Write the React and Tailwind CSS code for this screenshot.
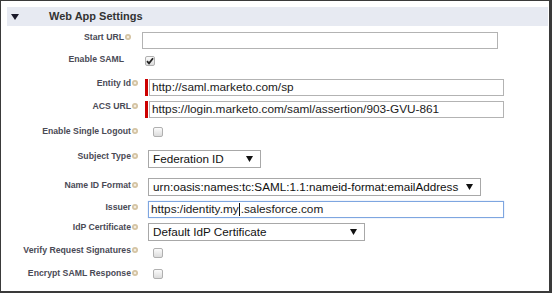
import React from "react";

const Help = () => (
  <svg width="6" height="6" viewBox="0 0 6 6" className="ml-[1px] shrink-0">
    <circle cx="3" cy="3" r="3" fill="#d4c3a2" />
    <circle cx="3" cy="3" r="1.3" fill="#f3ece0" />
  </svg>
);

const Label = ({ text, help = true, w = "w-[131px]", mt = "mt-0" }) => (
  <div className={`${w} ${mt} shrink-0 flex items-center justify-end h-[12px] text-[8.7px] leading-[12px] font-bold text-[#4a4a55]`}>
    <span>{text}</span>
    {help ? <Help /> : <span className="w-[7px]" />}
  </div>
);

const Box = ({ children, w, blue = false }) => (
  <div
    className={`${w} h-[17px] flex items-center px-[2px] bg-white text-[11.8px] text-[#1a1a1a] whitespace-nowrap overflow-hidden ${
      blue ? "border border-[#7ea6e0] shadow-[0_0_1px_#a9c4ec]" : "border border-[#b3b3b3]"
    }`}
  >
    {children}
  </div>
);

const Sel = ({ text, w }) => (
  <div className={`${w} h-[18px] flex items-center justify-between pl-[4px] pr-[7px] bg-white border border-[#a8a8a8] text-[11.7px] text-[#111] whitespace-nowrap overflow-hidden`}>
    <span>{text}</span>
    <svg width="7" height="6" viewBox="0 0 7 6" className="shrink-0">
      <polygon points="0,0 7,0 3.5,6" fill="#111" />
    </svg>
  </div>
);

const Check = ({ checked = false }) => (
  <div className="w-[10px] h-[10px] rounded-[2px] border border-[#b0b0b0] bg-gradient-to-b from-[#fbfbfb] to-[#dcdcdc] flex items-center justify-center">
    {checked && (
      <svg width="8" height="8" viewBox="0 0 8 8">
        <path d="M1 4.2 L3 6.3 L7 1.3" stroke="#222" strokeWidth="1.8" fill="none" />
      </svg>
    )}
  </div>
);

const Red = () => <div className="w-[3px] h-[17px] bg-[#cc0000] mr-[1px]" />;

export default function App() {
  return (
    <div
      className="w-[552px] h-[293px] bg-white border-l-[1px] border-t-[1px] border-r-[3px] border-b-[2px] border-[#3a3a3a] pt-[6px] pl-[6px] pr-[1px] overflow-hidden"
      style={{ fontFamily: '"Liberation Sans", Arial, sans-serif' }}
    >
      <div className="h-[19px] bg-[#e7eaf2] flex items-center">
        <svg width="8" height="6" viewBox="0 0 8 6" className="ml-[4px]">
          <polygon points="0,0 8,0 4,6" fill="#1a1a2a" />
        </svg>
        <span className="ml-[30px] text-[11px] font-bold text-[#333]">Web App Settings</span>
      </div>

      {/* Start URL */}
      <div className="mt-[6px] h-[19px] flex items-start">
        <Label text="Start URL" w="w-[124px]" mt="-mt-[1px]" />
        <div className="ml-[11px]">
          <Box w="w-[356px]" />
        </div>
      </div>

      {/* Enable SAML */}
      <div className="h-[28px] flex items-start">
        <Label text="Enable SAML" help={false} w="w-[124px]" mt="mt-[2px]" />
        <div className="ml-[14px] mt-[5px]">
          <Check checked />
        </div>
      </div>

      {/* Entity Id */}
      <div className="h-[22px] flex items-start">
        <Label text="Entity Id" mt="-mt-[2px]" />
        <div className="ml-[7px] flex">
          <Red />
          <Box w="w-[355px]">http://saml.marketo.com/sp</Box>
        </div>
      </div>

      {/* ACS URL */}
      <div className="h-[24px] flex items-start">
        <Label text="ACS URL" mt="-mt-[1px]" />
        <div className="ml-[7px] flex">
          <Red />
          <Box w="w-[355px]">https://login.marketo.com/saml/assertion/903-GVU-861</Box>
        </div>
      </div>

      {/* Enable Single Logout */}
      <div className="h-[25px] flex items-start">
        <Label text="Enable Single Logout" mt="mt-0" />
        <div className="ml-[15px] mt-[2px]">
          <Check />
        </div>
      </div>

      {/* Subject Type */}
      <div className="h-[28px] flex items-start">
        <Label text="Subject Type" mt="mt-0" />
        <div className="ml-[10px]">
          <Sel text="Federation ID" w="w-[113px]" />
        </div>
      </div>

      {/* Name ID Format */}
      <div className="h-[23px] flex items-start">
        <Label text="Name ID Format" mt="mt-[1px]" />
        <div className="ml-[10px]">
          <Sel text="urn:oasis:names:tc:SAML:1.1:nameid-format:emailAddress" w="w-[333px]" />
        </div>
      </div>

      {/* Issuer */}
      <div className="h-[22px] flex items-start">
        <Label text="Issuer" mt="mt-0" />
        <div className="ml-[10px]">
          <Box w="w-[356px]" blue>
            <span>https:/identity.my</span>
            <span className="inline-block w-[1px] h-[13px] bg-[#111] mx-[0.5px]" />
            <span>.salesforce.com</span>
          </Box>
        </div>
      </div>

      {/* IdP Certificate */}
      <div className="h-[24px] flex items-start">
        <Label text="IdP Certificate" mt="-mt-[2px]" />
        <div className="ml-[10px]">
          <Sel text="Default IdP Certificate" w="w-[217px]" />
        </div>
      </div>

      {/* Verify */}
      <div className="h-[22px] flex items-start">
        <Label text="Verify Request Signatures" mt="-mt-[3px]" />
        <div className="ml-[15px] mt-[1px]">
          <Check />
        </div>
      </div>

      {/* Encrypt */}
      <div className="flex items-start">
        <Label text="Encrypt SAML Response" mt="-mt-[2px]" />
        <div className="ml-[15px]">
          <Check />
        </div>
      </div>
    </div>
  );
}
